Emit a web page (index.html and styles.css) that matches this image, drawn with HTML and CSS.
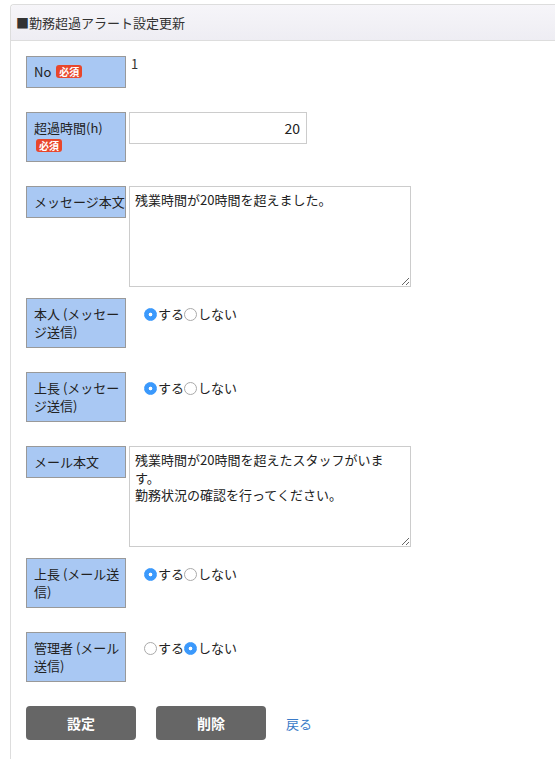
FILE: index.html
```html
<!DOCTYPE html>
<html>
<head>
    <meta charset="UTF-8">
    <title>勤務超過アラート設定更新</title>
    <link rel="stylesheet" href="styles.css">
</head>
<body>
    <div class="panel">
        <div class="panel-head">■勤務超過アラート設定更新</div>
        <form class="panel-body">
            <div class="row">
                <div class="label">No <span class="req">必須</span></div>
                <div class="value">1</div>
            </div>
            <div class="row">
                <div class="label">超過時間(h)<br><span class="req">必須</span></div>
                <input type="text" class="num" value="20">
            </div>
            <div class="row">
                <div class="label">メッセージ本文</div>
                <textarea class="text">残業時間が20時間を超えました。</textarea>
            </div>
            <div class="row">
                <div class="label">本人 (メッセージ送信)</div>
                <div class="radios">
                    <input type="radio" name="r1" checked>する<input type="radio" name="r1">しない
                </div>
            </div>
            <div class="row">
                <div class="label">上長 (メッセージ送信)</div>
                <div class="radios">
                    <input type="radio" name="r2" checked>する<input type="radio" name="r2">しない
                </div>
            </div>
            <div class="row">
                <div class="label">メール本文</div>
                <textarea class="text">残業時間が20時間を超えたスタッフがいます。
勤務状況の確認を行ってください。</textarea>
            </div>
            <div class="row">
                <div class="label">上長 (メール送信)</div>
                <div class="radios">
                    <input type="radio" name="r3" checked>する<input type="radio" name="r3">しない
                </div>
            </div>
            <div class="row">
                <div class="label">管理者 (メール送信)</div>
                <div class="radios">
                    <input type="radio" name="r4">する<input type="radio" name="r4" checked>しない
                </div>
            </div>
            <div class="buttons">
                <button type="button" class="btn">設定</button>
                <button type="button" class="btn">削除</button>
                <a href="#" class="back">戻る</a>
            </div>
        </form>
    </div>
</body>
</html>
```

FILE: styles.css
```css
html {
    overflow: hidden;
    }
body {
    margin: 0;
    background-color: #FFFFFF;
    color: #222222;
    font-family: "Noto Sans CJK JP", "Noto Sans", sans-serif;
    font-size: 13px;
    }
.panel {
    margin: 4px 0 0 10px;
    min-height: 760px;
    border: 1px solid #DDDDDD;
    border-right: none;
    border-bottom: none;
    border-top-left-radius: 4px;
    }
.panel-head {
    height: 35px;
    line-height: 35px;
    padding-left: 5px;
    color: #333333;
    background: linear-gradient(#F6F5F9, #EEEDF3);
    border-bottom: 1px solid #DDDDDD;
    border-top-left-radius: 4px;
    }
.panel-body {
    padding: 15px 0 0 15px;
    }
.row {
    display: flex;
    align-items: flex-start;
    margin-bottom: 11px;
    }
.label {
    box-sizing: border-box;
    flex: none;
    width: 100px;
    margin: 0 3px 13px 0;
    padding: 6px 0 6px 7px;
    line-height: 18px;
    background-color: #A9C8F3;
    border: 1px solid #999999;
    color: #222222;
    }
.req {
    display: inline-block;
    margin-left: 2px;
    padding: 0 3px;
    height: 13px;
    line-height: 13px;
    font-size: 10px;
    font-weight: bold;
    color: #FFFFFF;
    background-color: #E8462B;
    border-radius: 3px;
    vertical-align: 1px;
    }
.value {
    padding-left: 2px;
    line-height: 16px;
    color: #333333;
    }
.num {
    box-sizing: border-box;
    width: 178px;
    height: 32px;
    margin: 0;
    padding: 0 6px;
    text-align: right;
    font-family: "Noto Sans CJK JP", "Noto Sans", sans-serif;
    font-size: 14px;
    color: #222222;
    border: 1px solid #CCCCCC;
    outline: none;
    }
.text {
    box-sizing: border-box;
    width: 282px;
    height: 101px;
    margin: 0;
    padding: 4px 5px;
    font-family: "Noto Sans CJK JP", "Noto Sans", sans-serif;
    font-size: 13px;
    line-height: 17.5px;
    color: #222222;
    border: 1px solid #CCCCCC;
    outline: none;
    }
.radios {
    display: flex;
    align-items: center;
    padding: 7px 0 0 15px;
    line-height: 18px;
    color: #222222;
    }
.radios input {
    -webkit-appearance: none;
    appearance: none;
    box-sizing: border-box;
    width: 13px;
    height: 13px;
    margin: 0 1px 0 0;
    border: 1px solid #AAAAAA;
    border-radius: 50%;
    background-color: #FFFFFF;
    }
.radios input:checked {
    border-color: #3B99FC;
    background: radial-gradient(circle, #FFFFFF 0, #FFFFFF 1.5px, #3B99FC 2.2px);
    }
.buttons {
    display: flex;
    align-items: center;
    }
.btn {
    width: 110px;
    height: 34px;
    margin-right: 20px;
    background-color: #666666;
    border: none;
    border-radius: 4px;
    color: #FFFFFF;
    font-family: "Noto Sans CJK JP", "Noto Sans", sans-serif;
    font-size: 14px;
    font-weight: bold;
    }
.back {
    color: #3A7BC8;
    text-decoration: none;
    }
```
